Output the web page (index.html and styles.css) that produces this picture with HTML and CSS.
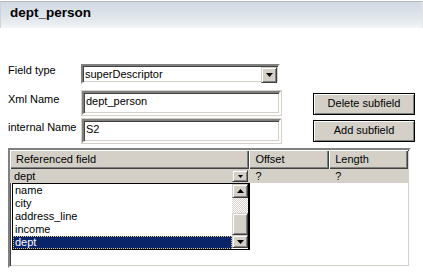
FILE: index.html
```html
<!DOCTYPE html>
<html>
<head>
<meta charset="utf-8">
<link rel="stylesheet" href="styles.css">
</head>
<body>
<div class="titlebar">dept_person</div>

<div class="form">
  <div class="row row-first">
    <div class="label label-first">Field type</div>
    <div class="select">
      <div class="select-text">superDescriptor</div>
      <div class="btn3d select-btn"><svg width="7" height="4" viewBox="0 0 7 4"><polygon points="0,0 7,0 3.5,4" fill="#000"/></svg></div>
    </div>
  </div>
  <div class="row row-second">
    <div class="label">Xml Name</div>
    <div class="field"><div class="field-inner">dept_person</div></div>
    <div class="button button-delete">Delete subfield</div>
  </div>
  <div class="row row-third">
    <div class="label">internal Name</div>
    <div class="field"><div class="field-inner">S2</div></div>
    <div class="button button-add">Add subfield</div>
  </div>
</div>

<div class="table">
  <div class="thead">
    <div class="th col-ref">Referenced field</div>
    <div class="th col-off">Offset</div>
    <div class="th col-len">Length</div>
  </div>
  <div class="tr">
    <div class="td col-ref td-combo">
      <span>dept</span>
      <div class="btn3d combo-btn"><svg width="5" height="3" viewBox="0 0 5 3"><polygon points="0,0 5,0 2.5,3" fill="#000"/></svg></div>
    </div>
    <div class="td col-off">?</div>
    <div class="td col-len">?</div>
  </div>

  <div class="dropdown">
    <div class="items">
      <div class="item">name</div>
      <div class="item">city</div>
      <div class="item">address_line</div>
      <div class="item">income</div>
      <div class="item selected">dept</div>
    </div>
    <div class="scrollbar">
      <div class="btn3d sb-up"><svg width="7" height="4" viewBox="0 0 7 4"><polygon points="0,4 7,4 3.5,0" fill="#000"/></svg></div>
      <div class="sb-track"></div>
      <div class="btn3d sb-thumb"></div>
      <div class="btn3d sb-down"><svg width="7" height="4" viewBox="0 0 7 4"><polygon points="0,0 7,0 3.5,4" fill="#000"/></svg></div>
    </div>
  </div>
</div>
</body>
</html>
```

FILE: styles.css
```css
* { box-sizing: border-box; }
html, body { margin: 0; padding: 0; background: #fff; }
body {
  width: 423px;
  height: 277px;
  overflow: hidden;
  font-family: "Liberation Sans", Arial, sans-serif;
  font-size: 11px;
  line-height: 13px;
  color: #000;
}

.titlebar {
  margin-top: 1px;
  height: 27px;
  border-top: 1px solid #b4b7bb;
  border-left: 1px solid #cfd3d8;
  border-right: 1px solid #e4e6e9;
  background: linear-gradient(#d3dae3 0%, #dbe1e8 40%, #e8ecf0 80%, #f4f6f8 100%);
  padding: 3px 0 0 9px;
  font-size: 13.5px;
  line-height: 16px;
  font-weight: bold;
}

.form {
  margin-top: 36px;
  padding-left: 8px;
}
.row { display: flex; align-items: flex-start; }
.row-second { margin-top: 6px; }
.row-third { margin-top: 2px; }
.label { width: 73px; padding-top: 3px; }
.label-first { padding-top: 0; }

.btn3d {
  background: #d4d0c8;
  border: 1px solid;
  border-color: #d4d0c8 #404040 #404040 #d4d0c8;
  box-shadow: inset 1px 1px #fff, inset -1px -1px #808080;
  display: flex;
  align-items: center;
  justify-content: center;
}

.select {
  width: 199px;
  height: 20px;
  display: flex;
  border: 2px solid;
  border-color: #808080 #fff #fff #808080;
  box-shadow: inset 1px 1px #404040, inset -1px -1px #d4d0c8;
  padding: 1px;
  background: #fff;
}
.select-text { flex: 1; line-height: 14px; padding-left: 1px; }
.select-btn { width: 16px; height: 16px; }

.field {
  width: 201px;
  height: 26px;
  border: 1px solid #d4d0c8;
}
.field-inner {
  height: 100%;
  border: 2px solid;
  border-color: #808080 #fff #fff #808080;
  box-shadow: inset 1px 1px #404040, inset -1px -1px #d4d0c8;
  padding: 2px 0 0 2px;
}

.button {
  margin-left: 31px;
  width: 102px;
  height: 22px;
  background: #d4d0c8;
  border: 1px solid #000;
  box-shadow: inset 1px 1px #fff, inset -1px -1px #808080;
  text-align: center;
  line-height: 19px;
}
.button-delete { margin-top: 3px; }
.button-add { margin-top: 2px; }

.table {
  position: relative;
  margin: 4px 0 0 8px;
  width: 403px;
  height: 120px;
  border: 2px solid;
  border-color: #808080 #fff #fff #808080;
  box-shadow: inset 1px 1px #404040, inset -1px -1px #d4d0c8;
  padding: 0 1px 1px 0;
}
.thead, .tr { display: flex; }
.col-ref { width: 240px; }
.col-off { width: 80px; }
.col-len { width: 79px; }
.th {
  height: 19px;
  background: #d4d0c8;
  box-shadow: inset 1px 1px #fff, inset -1px -1px #404040, inset -2px -2px #808080;
  padding: 3px 0 0 6px;
}
.tr { height: 14px; background: #d4d0c8; }
.td { padding: 1px 0 0 6px; }
.td-combo {
  display: flex;
  justify-content: space-between;
  padding: 1px 0 0 4px;
}
.combo-btn { width: 16px; height: 12px; margin-right: 1px; }

.dropdown {
  position: absolute;
  left: 2px;
  top: 33px;
  width: 238px;
  height: 67px;
  border: 1px solid #000;
  border-right-width: 2px;
  background: #fff;
  display: flex;
}
.items { flex: 1; }
.item { height: 13px; line-height: 13px; padding-left: 2px; }
.item.selected {
  background: #0a246a;
  color: #fff;
  outline: 1px dotted #e8c878;
  outline-offset: -1px;
}
.scrollbar { width: 16px; display: flex; flex-direction: column; }
.sb-up { height: 14px; }
.sb-track {
  height: 15px;
  background: repeating-conic-gradient(#d4d0c8 0 25%, #fff 0 50%) 0 0 / 2px 2px;
}
.sb-thumb { height: 22px; }
.sb-down { height: 13px; }
```
